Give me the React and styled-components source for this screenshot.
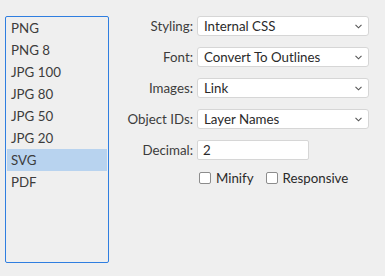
import React from "react";
import styled, { createGlobalStyle } from "styled-components";

const Global = createGlobalStyle`
  html, body { margin: 0; padding: 0; background: #efefef; }
  body { font-family: Lato, "Noto Sans", sans-serif; font-size: 13.3px; color: #333; }
`;

const Page = styled.div`
  display: flex;
  align-items: flex-start;
  width: 385px;
  height: 276px;
  padding: 16px 0 0 5px;
  box-sizing: border-box;
`;

const List = styled.div`
  width: 104px;
  height: 247px;
  box-sizing: border-box;
  border: 1px solid #2f7ee0;
  border-radius: 2px;
  background: #efefef;
  padding: 0 1px;
  display: flex;
  flex-direction: column;
`;

const Item = styled.div`
  height: 22px;
  line-height: 22px;
  padding-left: 4px;
  background: ${(p) => (p.$selected ? "#b8d3ef" : "transparent")};
  color: #3c3c3c;
`;

const Form = styled.div`
  display: grid;
  grid-template-columns: 84px 172px;
  grid-auto-rows: 20px;
  column-gap: 4px;
  row-gap: 11px;
`;

const Label = styled.div`
  text-align: right;
  line-height: 20px;
  color: #3c3c3c;
`;

const Select = styled.div`
  position: relative;
  box-sizing: border-box;
  height: 20px;
  background: #fff;
  border: 1px solid #d6d6d6;
  border-radius: 3px;
  padding-left: 6px;
  line-height: 18px;
  color: #2a2a2a;
`;

const Chevron = styled.svg`
  position: absolute;
  right: 6px;
  top: 7px;
`;

const Input = styled.div`
  box-sizing: border-box;
  width: 112px;
  height: 20px;
  background: #fff;
  border: 1px solid #d6d6d6;
  border-radius: 2px;
  padding-left: 5px;
  line-height: 18px;
  color: #2a2a2a;
`;

const Checks = styled.div`
  grid-column: 2;
  display: flex;
  align-items: center;
  gap: 12px;
  padding-left: 2px;
  height: 14px;
`;

const Check = styled.label`
  display: flex;
  align-items: center;
  gap: 5px;
  color: #2a2a2a;
`;

const Box = styled.span`
  width: 12px;
  height: 12px;
  box-sizing: border-box;
  border: 1px solid #8c8c8c;
  border-radius: 2px;
  background: #fff;
`;

const items = ["PNG", "PNG 8", "JPG 100", "JPG 80", "JPG 50", "JPG 20", "SVG", "PDF"];

const SelectField = ({ value }) => (
  <Select>
    {value}
    <Chevron width="7" height="5" viewBox="0 0 7 5">
      <path d="M0.5 0.8 L3.5 3.8 L6.5 0.8" fill="none" stroke="#555" strokeWidth="1.1" />
    </Chevron>
  </Select>
);

export default function App() {
  return (
    <>
      <Global />
      <Page>
        <List>
          {items.map((it) => (
            <Item key={it} $selected={it === "SVG"}>{it}</Item>
          ))}
        </List>
        <Form>
          <Label>Styling:</Label>
          <SelectField value="Internal CSS" />
          <Label>Font:</Label>
          <SelectField value="Convert To Outlines" />
          <Label>Images:</Label>
          <SelectField value="Link" />
          <Label>Object IDs:</Label>
          <SelectField value="Layer Names" />
          <Label>Decimal:</Label>
          <Input>2</Input>
          <Checks>
            <Check><Box />Minify</Check>
            <Check><Box />Responsive</Check>
          </Checks>
        </Form>
      </Page>
    </>
  );
}
